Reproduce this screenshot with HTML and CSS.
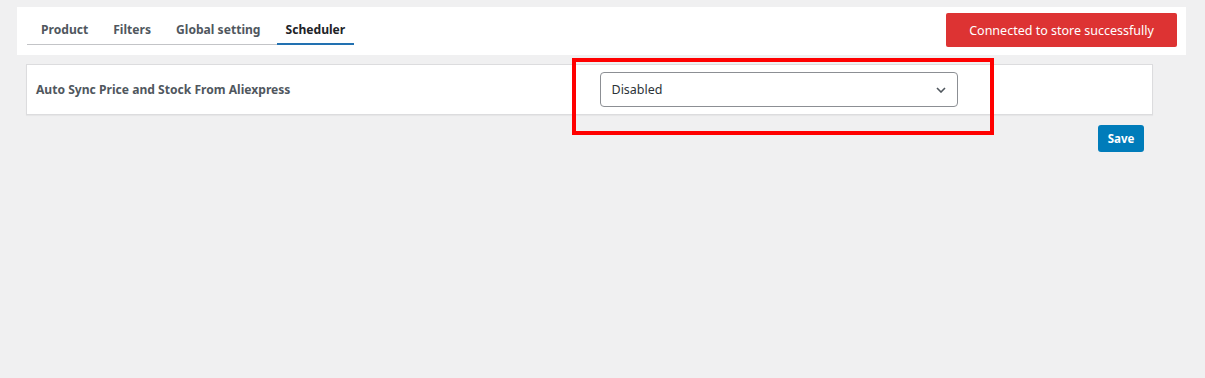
FILE: index.html
```html
<!DOCTYPE html>
<html>
<head>
<meta charset="utf-8">
<link rel="stylesheet" href="styles.css">
</head>
<body>
<div class="page">
  <div class="topbar">
    <nav class="tabs">
      <a class="tab">Product</a>
      <a class="tab">Filters</a>
      <a class="tab">Global setting</a>
      <a class="tab active">Scheduler</a>
    </nav>
    <div class="status">Connected to store successfully</div>
  </div>
  <div class="settings">
    <div class="row">
      <div class="label">Auto Sync Price and Stock From Aliexpress</div>
      <div class="field">
        <div class="select">
          <span>Disabled</span>
          <svg class="chev" width="10" height="6" viewBox="0 0 10 6"><path d="M1 1 L5 5 L9 1" fill="none" stroke="#50575e" stroke-width="1.6"/></svg>
        </div>
        <div class="highlight"></div>
      </div>
    </div>
  </div>
  <div class="actions">
    <button class="save">Save</button>
  </div>
</div>
</body>
</html>
```
FILE: styles.css
```css
html, body {
  margin: 0;
  padding: 0;
  background: #f0f0f1;
  font-family: "Noto Sans", "Open Sans", sans-serif;
  font-size: 13px;
}
.page {
  padding: 7px 0 0 0;
}
.topbar {
  margin: 0 19px 0 17px;
  height: 48px;
  background: #fff;
  display: flex;
  justify-content: space-between;
  align-items: flex-start;
  box-sizing: border-box;
}
.tabs {
  margin: 8px 0 0 10px;
  padding-left: 5px;
  display: flex;
  gap: 7px;
  border-bottom: 1px solid #c3c4c7;
  height: 29px;
}
.tab {
  padding: 0 9px;
  height: 30px;
  line-height: 30px;
  font-weight: 700;
  color: #50575e;
  font-size: 12.1px;
  box-sizing: border-box;
}
.tab.active {
  color: #1d2327;
  border-bottom: 2px solid #2271b1;
}
.status {
  margin: 6px 9px 0 0;
  width: 231px;
  height: 34px;
  background: #dd3333;
  color: #fff;
  border-radius: 2px;
  display: flex;
  align-items: center;
  justify-content: center;
  font-size: 12.5px;
}
.settings {
  margin: 9px 52px 0 26px;
  background: #fff;
  border: 1px solid #dcdcde;
  box-shadow: 0 1px 1px rgba(0,0,0,.04);
}
.row {
  display: grid;
  grid-template-columns: 1fr 1fr;
  height: 49px;
  align-items: center;
}
.label {
  padding-left: 9px;
  font-weight: 700;
  color: #50575e;
  font-size: 12.1px;
}
.field {
  position: relative;
  padding-left: 10px;
}
.select {
  width: 358px;
  height: 35px;
  box-sizing: border-box;
  border: 1px solid #8c8f94;
  border-radius: 4px;
  display: flex;
  align-items: center;
  justify-content: space-between;
  padding: 0 11px 0 11px;
  color: #2c3338;
  font-size: 12.5px;
}
.highlight {
  position: absolute;
  left: -18px;
  top: -14px;
  width: 422px;
  height: 77px;
  box-sizing: border-box;
  border: 4px solid #ff0000;
}
.actions {
  margin: 10px 61px 0 0;
  display: flex;
  justify-content: flex-end;
}
.save {
  width: 46px;
  height: 27px;
  border: none;
  border-radius: 3px;
  background: #007cba;
  color: #fff;
  font-family: inherit;
  font-weight: 700;
  font-size: 11.5px;
  padding: 0;
}
```
